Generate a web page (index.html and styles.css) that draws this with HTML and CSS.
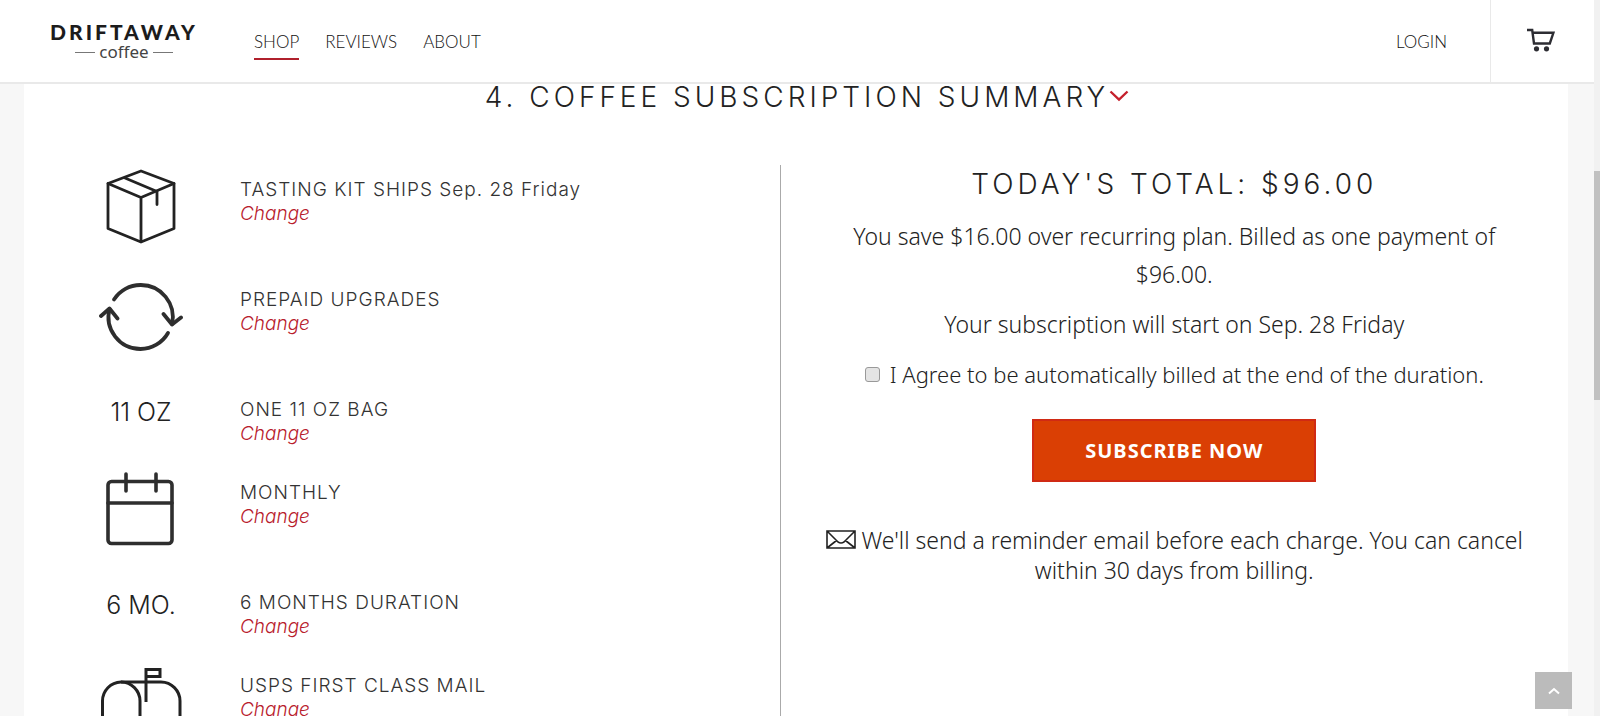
FILE: index.html
```html
<!DOCTYPE html>
<html lang="en">
<head>
  <meta charset="UTF-8" />
  <meta name="viewport" content="width=device-width, initial-scale=1.0" />
  <title>Driftaway Coffee</title>
  <link rel="stylesheet" href="styles.css">
</head>
<body>

<header class="header">
  <a href="#" class="logo">
    <span class="logo-name">DRIFTAWAY</span>
    <span class="logo-sub">coffee</span>
  </a>
  <nav class="nav">
    <a href="#shop" class="active">SHOP</a>
    <a href="#reviews">REVIEWS</a>
    <a href="#about">ABOUT</a>
  </nav>
  <a href="#login" class="login">LOGIN</a>
  <a href="#cart" class="cart" aria-label="Cart">
    <svg width="28" height="24" viewBox="0 0 28 24" fill="none" stroke="#2d2d33" stroke-width="2.4">
      <path d="M0 2H5.2L7 15.5H22.8L26.4 4.8H6"/>
      <circle cx="9.5" cy="20.8" r="2.6" fill="#2d2d33" stroke="none"/>
      <circle cx="19.5" cy="20.8" r="2.6" fill="#2d2d33" stroke="none"/>
    </svg>
  </a>
</header>

<main class="page" id="top">
  <h2 class="title">4. COFFEE SUBSCRIPTION SUMMARY<svg width="20" height="14" viewBox="0 0 20 14" fill="none" stroke="#c5202c" stroke-width="2.4"><path d="M1.5 2.5L10 10.5L18.5 2.5"/></svg></h2>

  <div class="summary">
    <ul class="items">
      <li class="item">
        <div class="icon">
          <svg width="84" height="84" viewBox="0 0 84 84" fill="none" stroke="#222" stroke-width="2.8" stroke-linejoin="round" stroke-linecap="round">
            <path d="M42 6L75 18.5V63.5L42 77L9 63.5V18.5Z"/>
            <path d="M9 18.5L42 32.5L75 18.5M42 32.5V76.5"/>
            <path d="M26 13L58 26.5V39.5"/>
          </svg>
        </div>
        <div class="label"><span>TASTING KIT SHIPS Sep. 28 Friday</span><a href="#kit">Change</a></div>
      </li>
      <li class="item">
        <div class="icon">
          <svg width="84" height="84" viewBox="0 0 84 84" fill="none" stroke="#2e2e2e" stroke-width="3.8" stroke-linejoin="round" stroke-linecap="round">
            <path d="M15 24.5A32 32 0 0 1 41.5 10A32 32 0 0 1 73 49"/>
            <path d="M64.5 39L73 49.5L82 42.5"/>
            <path d="M69 58A32 32 0 0 1 41.5 74A32 32 0 0 1 10.5 34"/>
            <path d="M2 41L10.5 33.5L18.5 43.5"/>
          </svg>
        </div>
        <div class="label"><span>PREPAID UPGRADES</span><a href="#type">Change</a></div>
      </li>
      <li class="item item-text">
        <div class="icon">11 OZ</div>
        <div class="label"><span>ONE 11 OZ BAG</span><a href="#size">Change</a></div>
      </li>
      <li class="item">
        <div class="icon">
          <svg width="84" height="84" viewBox="0 0 84 84" fill="none" stroke="#2e2e2e" stroke-width="3.6" stroke-linecap="round">
            <rect x="9" y="13.5" width="64" height="62" rx="3.5"/>
            <path d="M9 35H73M27 6V23M57 6V23"/>
          </svg>
        </div>
        <div class="label"><span>MONTHLY</span><a href="#frequency">Change</a></div>
      </li>
      <li class="item item-text">
        <div class="icon">6 MO.</div>
        <div class="label"><span>6 MONTHS DURATION</span><a href="#duration">Change</a></div>
      </li>
      <li class="item">
        <div class="icon">
          <svg width="84" height="84" viewBox="0 0 84 84" fill="none" stroke="#222" stroke-width="3">
            <path d="M3.5 66V40A19 19 0 0 1 22 21H62A19 19 0 0 1 81 40V66Z"/>
            <path d="M22 21A19 19 0 0 1 41 40V66"/>
            <path d="M47 41V8.5H61V15.5H47"/>
          </svg>
        </div>
        <div class="label"><span>USPS FIRST CLASS MAIL</span><a href="#shipping">Change</a></div>
      </li>
    </ul>

    <form class="total">
      <h3>TODAY'S TOTAL: $96.00</h3>
      <p>You save $16.00 over recurring plan. Billed as one payment of $96.00.</p>
      <p>Your subscription will start on Sep. 28 Friday</p>
      <div class="agree">
        <input type="checkbox" id="agree">
        <label for="agree">I Agree to be automatically billed at the end of the duration.</label>
      </div>
      <button type="button" class="subscribe">SUBSCRIBE NOW</button>
      <p class="reminder"><svg width="30" height="19" viewBox="0 0 30 19" fill="none" stroke="#222" stroke-width="1.6"><path d="M1 1H29V18H1ZM1 1L12 12Q15 14 18 12L29 1M1 18L10.5 10.5M29 18L19.5 10.5"/></svg> We'll send a reminder email before each charge. You can cancel within 30 days from billing.</p>
    </form>
  </div>
</main>

<a href="#top" class="to-top" aria-label="Back to top">
  <svg width="12" height="8" viewBox="0 0 12 8" fill="none" stroke="#fff" stroke-width="2"><path d="M1 6.5L6 2L11 6.5"/></svg>
</a>
<div class="scrollbar"><div class="thumb"></div></div>

</body>
</html>
```

FILE: styles.css
```css
* { box-sizing: border-box; }
body { margin: 0; height: 100vh; overflow: hidden; background: #f7f7f7; color: #222;
       font-family: "Noto Sans", sans-serif; font-weight: 300; }
a { text-decoration: none; }
h2, h3, p, ul { margin: 0; padding: 0; }

.header { position: fixed; top: 0; left: 0; right: 6px; height: 84px; z-index: 10;
          display: flex; align-items: stretch; padding-left: 49px;
          background: #fff; border-bottom: 2px solid #e9e9e9;
          font-family: Lato, sans-serif; font-size: 17px; }
.logo { display: flex; flex-direction: column; align-items: center; width: 150px; padding-top: 20px; color: #1c1c1c; }
.logo-name { font-size: 21px; line-height: 24px; font-weight: 900; letter-spacing: 3px; }
.logo-sub { display: flex; align-items: center; gap: 4px; line-height: 16px; color: #444;
            font-family: "Noto Sans", sans-serif; font-weight: 400; }
.logo-sub::before, .logo-sub::after { content: ""; width: 20px; height: 1px; background: #777; }
.nav { display: flex; align-items: flex-start; gap: 26px; margin-left: 55px; padding-top: 26px; }
.nav a, .login { color: #111; line-height: 32px; }
.nav .active { border-bottom: 2px solid #b0202c; }
.login { margin-left: auto; padding: 26px 43px 0 0; }
.cart { display: flex; justify-content: center; width: 104px; padding: 28px 4px 0 0; border-left: 1px solid #e9e9e9; }

.page { margin: 0 32px 0 24px; padding-top: 79px; background: #fff; }
.title { padding-left: 22px; text-align: center; font-family: Inter, sans-serif;
         font-size: 28px; line-height: 36px; font-weight: 300; letter-spacing: 4px; }
.title svg { vertical-align: 4px; }
.summary { display: grid; grid-template-columns: 49fr 51fr; margin-top: 50px; }

.items { list-style: none; border-right: 1px solid #aaa; font-family: Inter, sans-serif; }
.item { display: grid; grid-template-columns: 84px 1fr; column-gap: 57px; height: 110px; padding-left: 75px; }
.item-text { height: 83px; }
.icon { text-align: center; font-size: 25px; line-height: 54px; }
.icon svg { display: block; }
.label { display: flex; flex-direction: column; align-items: flex-start; padding-top: 13px;
         font-size: 19px; line-height: 24px; color: #333; }
.label span { letter-spacing: 1px; }
.label a { color: #b8202c; font-style: italic; }

.total { display: flex; flex-direction: column; align-items: center; gap: 12px; padding: 0 34px;
         text-align: center; font-size: 23px; line-height: 38px; }
.total h3 { margin-bottom: 2px; font-family: Inter, sans-serif; font-size: 28px; font-weight: 300; letter-spacing: 4px; }
.agree { display: flex; align-items: center; gap: 10px; font-size: 22px; }
.agree input { appearance: none; width: 15px; height: 15px; margin: 0; background: #e4e4e4;
               border: 1px solid #999; border-radius: 3px; }
.subscribe { margin: 14px 0 31px; padding: 0 51px; background: #da3f04; border: 2px solid #d02a14; color: #fff;
             font-family: "Noto Sans", sans-serif; font-size: 20px; line-height: 59px; font-weight: 700; letter-spacing: 1px; }
.reminder { line-height: 30px; }

.to-top { position: fixed; right: 28px; bottom: 7px; width: 37px; height: 37px;
          display: flex; align-items: center; justify-content: center; background: #bbb; }
.scrollbar { position: fixed; top: 0; right: 0; bottom: 0; width: 6px; padding-top: 171px; background: #f1f1f1; }
.thumb { height: 229px; background: #c1c1c1; }
```
